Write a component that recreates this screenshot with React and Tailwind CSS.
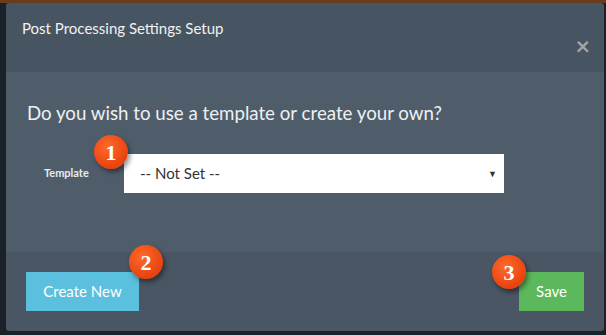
import React from "react";

const Badge = ({ n, className }) => (
    <div
        className={`absolute w-[34px] h-[34px] rounded-full flex items-center justify-center text-white font-bold text-[22px] shadow-[2px_3px_5px_rgba(0,0,0,0.45)] bg-[radial-gradient(circle_at_40%_35%,#ff6a2b,#e8420e_70%)] ${className}`}
        style={{ fontFamily: '"Liberation Serif", serif' }}
    >
        {n}
    </div>
);

const App = () => {
    return (
        <div
            className="w-[606px] h-[335px] bg-[#1b2129] relative overflow-hidden"
            style={{ fontFamily: "Lato, 'Open Sans', sans-serif" }}
        >
            <div className="h-[3px] bg-[#6b3b1d]" />
            <div className="ml-[6px] mr-[2px] h-[328px] rounded-[3px] overflow-hidden flex flex-col relative">
                {/* header */}
                <div className="h-[69px] bg-[#475461] relative px-4 pt-[15px]">
                    <h4 className="text-[15px] text-[#f2f2f2] leading-[20px]">Post Processing Settings Setup</h4>
                    <span className="absolute right-[14px] top-[30px] text-[#9ea6ae] text-[25px] font-bold leading-none">×</span>
                </div>

                {/* body */}
                <div className="h-[180px] bg-[#4f5d6b] pl-[21px] pr-[100px] pt-[28px]">
                    <p className="text-[18.7px] text-[#eef0f2] leading-[26px]">
                        Do you wish to use a template or create your own?
                    </p>
                    <div className="flex items-center mt-[28px]">
                        <label className="w-[97px] pl-[17px] text-[11px] font-bold text-[#e8ebee]">Template</label>
                        <div className="w-[380px] h-[39px] bg-white flex items-center justify-between pl-[16px] pr-[7px]">
                            <span className="text-[15px] text-[#333]">-- Not Set --</span>
                            <span className="text-[9px] text-[#333]">▼</span>
                        </div>
                    </div>
                </div>

                {/* footer */}
                <div className="flex-1 bg-[#4a5663] flex items-start justify-between pl-[20px] pr-[20px] pt-[20px]">
                    <button className="w-[113px] h-[39px] bg-[#5bc0de] text-white text-[15px]">Create New</button>
                    <button className="w-[65px] h-[39px] bg-[#5cb85c] text-white text-[15px]">Save</button>
                </div>
            </div>

            <Badge n="1" className="left-[94px] top-[135px]" />
            <Badge n="2" className="left-[129px] top-[245px]" />
            <Badge n="3" className="left-[492px] top-[255px]" />
        </div>
    );
};

export default App;
